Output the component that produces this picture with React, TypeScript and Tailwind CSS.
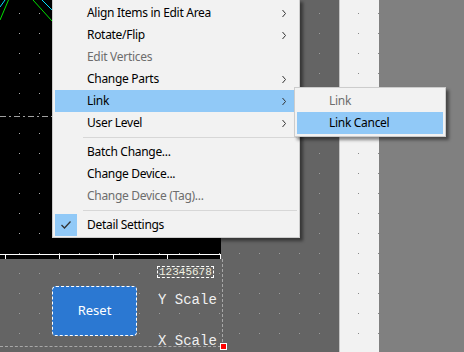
import React from "react";

const ui = { fontFamily: '"Noto Sans", "Liberation Sans", sans-serif' };
const mono = { fontFamily: '"Liberation Mono", "DejaVu Sans Mono", monospace' };

function Dots({ id, x, y, color }: { id: string; x: number; y: number; color: string }) {
  return (
    <svg className="absolute inset-0 w-full h-full pointer-events-none">
      <defs>
        <pattern id={id} width="20" height="20" patternUnits="userSpaceOnUse">
          <rect x={x} y={y} width="1" height="1" fill={color} />
        </pattern>
      </defs>
      <rect width="100%" height="100%" fill={`url(#${id})`} />
    </svg>
  );
}

function Chevron() {
  return (
    <svg width="6" height="9" viewBox="0 0 6 9" className="shrink-0">
      <path d="M1.5 1 L4.5 4.5 L1.5 8" fill="none" stroke="#333" strokeWidth="1" />
    </svg>
  );
}

type Item = { label: string; sub?: boolean; disabled?: boolean; active?: boolean; checked?: boolean };

function MenuItem({ item }: { item: Item }) {
  return (
    <div
      className={
        "relative flex items-center h-[22px] pl-[32px] pr-[10px] text-[12px] tracking-[-0.3px] " +
        (item.active ? "bg-[#91c9f7] " : "") +
        (item.disabled ? "text-[#6d6d6d]" : "text-black")
      }
    >
      {item.checked && (
        <div className="absolute left-0 top-0 w-[22px] h-[22px] bg-[#91c9f7] flex items-center justify-center">
          <svg width="12" height="10" viewBox="0 0 12 10">
            <path d="M1.5 5 L4.5 8 L10.5 1.5" fill="none" stroke="#333" strokeWidth="1.3" />
          </svg>
        </div>
      )}
      <span className="flex-1 leading-none">{item.label}</span>
      {item.sub && <Chevron />}
    </div>
  );
}

function Sep() {
  return (
    <div className="h-[7px] flex items-center pl-[28px]">
      <div className="h-px w-full bg-[#d7d7d7]" />
    </div>
  );
}

export default function App() {
  const top: Item[] = [
    { label: "Align Items in Edit Area", sub: true },
    { label: "Rotate/Flip", sub: true },
    { label: "Edit Vertices", disabled: true },
    { label: "Change Parts", sub: true },
    { label: "Link", sub: true, active: true },
    { label: "User Level", sub: true },
  ];
  const mid: Item[] = [
    { label: "Batch Change..." },
    { label: "Change Device..." },
    { label: "Change Device (Tag)...", disabled: true },
  ];
  return (
    <div className="relative w-[464px] h-[352px] overflow-hidden flex bg-[#646464]" style={ui}>
      {/* canvas column */}
      <div className="w-[221px] flex flex-col shrink-0">
        <div className="relative h-[259px] bg-black">
          <svg width="221" height="259" className="absolute inset-0">
            <defs>
              <pattern id="pb" width="20" height="20" patternUnits="userSpaceOnUse">
                <rect x="19" y="13" width="1" height="1" fill="#a8a8a8" />
              </pattern>
            </defs>
            <rect width="221" height="259" fill="url(#pb)" />
            <line x1="5" y1="0" x2="0" y2="7" stroke="#00e5ff" strokeWidth="1" />
            <line x1="8.5" y1="0" x2="0" y2="20" stroke="#00e000" strokeWidth="1" />
            <line x1="33" y1="0" x2="52" y2="21" stroke="#00e000" strokeWidth="1" />
            <line x1="42" y1="0" x2="52" y2="10" stroke="#00e5ff" strokeWidth="1" />
            <line x1="0" y1="116.5" x2="52" y2="116.5" stroke="#a0a0a0" strokeWidth="1" strokeDasharray="6 3 2 3" />
            <line x1="0" y1="254.5" x2="221" y2="254.5" stroke="#fff" strokeWidth="1" />
            {[5.5, 59.5, 113.5, 167.5, 220.5].map((x) => (
              <line key={x} x1={x} y1="254" x2={x} y2="259" stroke="#fff" strokeWidth="1" />
            ))}
          </svg>
        </div>
        <div className="relative flex-1 bg-[#646464]">
          <Dots id="pg" x={19} y={14} color="#9a9a9a" />
          <div className="relative flex pt-[7px] pl-[157px]">
            <div className="border border-dashed border-white px-[1px] h-[12px] flex items-center text-[11px] leading-none text-[#f0f0e0]" style={mono}>
              12345678
            </div>
          </div>
          <div className="relative flex items-center mt-[8px]">
            <div className="ml-[52px] w-[85px] h-[50px] rounded-[4px] bg-[#2b78d2] border border-dashed border-white flex items-center justify-center text-white text-[13px]">
              Reset
            </div>
            <div className="ml-[21px] text-[14px] text-[#f0f0f0] leading-none -mt-[22px]" style={mono}>
              Y Scale
            </div>
          </div>
          <div className="relative pl-[158px] -mt-[2px] text-[14px] text-[#f0f0f0] leading-none" style={mono}>
            X Scale
          </div>
        </div>
      </div>
      {/* dark grey column */}
      <div className="relative w-[118px] shrink-0 bg-[#646464]">
        <Dots id="pd" x={18} y={13} color="#9a9a9a" />
      </div>
      {/* light strip */}
      <div className="relative w-[40px] shrink-0 bg-[#f2f2f2] border-l border-[#c4c4c4]">
        <Dots id="pl" x={18} y={13} color="#8a8a8a" />
      </div>
      <div className="flex-1 bg-[#808080]" />

      {/* canvas overlays: dashed selection edges and handle */}
      <div className="absolute left-0 top-[346px] w-[221px] border-t border-dashed border-[#a8a8a8]" />
      <div className="absolute left-[222px] top-[259px] h-[88px] border-l border-dashed border-[#a8a8a8]" />
      <div className="absolute left-[220px] top-[343px] w-[7px] h-[7px] bg-[#ff0000] border border-white" />

      {/* context menu */}
      <div className="absolute left-[52px] top-[-1px] w-[248px] bg-[#f2f2f2] border border-[#cccccc] pt-[2px] pb-[1px] px-[2px] shadow-[3px_3px_3px_rgba(0,0,0,0.45)]">
        {top.map((it) => (
          <MenuItem key={it.label} item={it} />
        ))}
        <Sep />
        {mid.map((it) => (
          <MenuItem key={it.label} item={it} />
        ))}
        <Sep />
        <MenuItem item={{ label: "Detail Settings", checked: true }} />
      </div>

      {/* submenu */}
      <div className="absolute left-[294px] top-[87px] w-[152px] bg-[#f2f2f2] border border-[#cccccc] pt-[2px] pb-[2px] px-[2px] shadow-[3px_3px_3px_rgba(0,0,0,0.45)]">
        <MenuItem item={{ label: "Link", disabled: true }} />
        <MenuItem item={{ label: "Link Cancel", active: true }} />
      </div>
    </div>
  );
}
